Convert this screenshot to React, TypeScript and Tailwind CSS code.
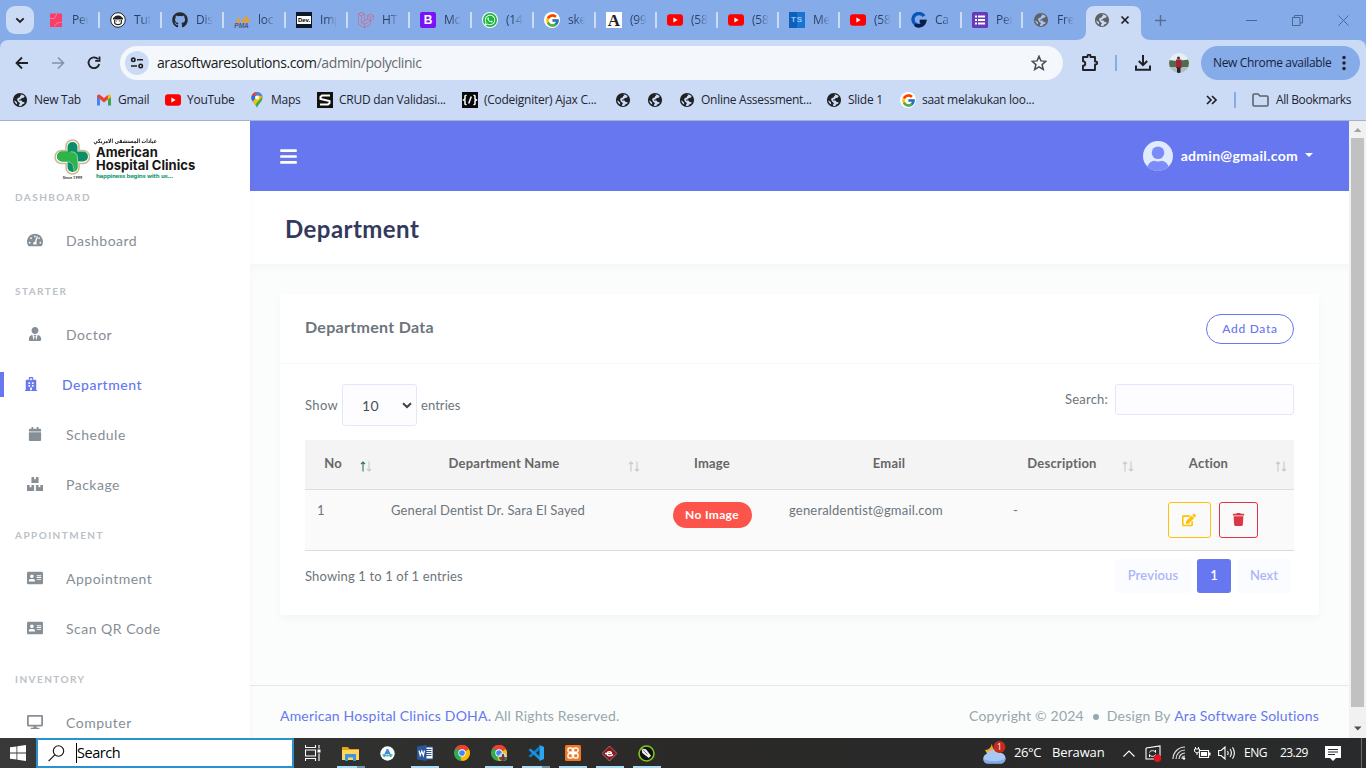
import React from 'react';
import {
  FaTachometerAlt, FaUserTie, FaHospital, FaCalendar, FaBoxes, FaAddressCard, FaDesktop,
  FaBars, FaEdit, FaTrash, FaGithub, FaWhatsapp, FaLaravel,
} from 'react-icons/fa';
import { FcGoogle } from 'react-icons/fc';

const SEGOE = "font-['Open_Sans','Noto_Sans',sans-serif]";
const NUNITO = "font-['Lato','Noto_Sans',sans-serif]";

/* ---------- browser icons ---------- */

function Globe({ dark = '#202124', light = '#cbdbf6' }: { dark?: string; light?: string }) {
  return (
    <svg width="16" height="16" viewBox="0 0 16 16">
      <circle cx="8" cy="8" r="7.1" fill={dark} />
      <path d="M8.3 2.5c1.5-.3 3.3.4 4.4 1.8l-1 1.5-1.9.2-.9 1.3-2 .4.3.9h2.2l1.3 1.5 1.9.2-.3 1.3-2.1.8-1 1.6-1.9.1-.4-1.4 1.1-1.5-2-1.600-.9-2 .6-1.600 2-.4.3-1.300 1.100-.5z" fill={light} />
      <path d="M2.300 8.200l2.600 2 .3 2.400C3.500 11.500 2.300 10 2.300 8.200z" fill={light} />
    </svg>
  );
}

function YouTube() {
  return (
    <svg width="16" height="16" viewBox="0 0 16 16">
      <rect x="0" y="2.300" width="16" height="11.400" rx="3" fill="#ff0000" />
      <path d="M6.400 5.600v4.800L10.600 8z" fill="#fff" />
    </svg>
  );
}

function Google() {
  return (
    <span className="flex size-4 items-center justify-center rounded-full bg-white">
      <FcGoogle className="size-[15px]" />
    </span>
  );
}

function Chrome({ size = 17, person = false }: { size?: number; person?: boolean }) {
  return (
    <svg width={size} height={size} viewBox="0 0 48 48">
      <path d="M24 24L3.200 12A24 24 0 0 1 44.800 12z" fill="#ea4335" />
      <path d="M24 24L44.800 12A24 24 0 0 1 24 48z" fill="#fbbc04" />
      <path d="M24 24L24 48A24 24 0 0 1 3.200 12z" fill="#34a853" />
      <path d="M34 29L24 48l-5-8 9-12z" fill="#fbbc04" />
      <path d="M3.200 12L14 30l9-4-9-14z" fill="#34a853" />
      <path d="M3.200 12A24 24 0 0 1 44.800 12L24 13z" fill="#ea4335" />
      <circle cx="24" cy="24" r="11" fill="#fff" />
      <circle cx="24" cy="24" r="8.500" fill="#4285f4" />
      {person && (
        <g>
          <circle cx="36" cy="36" r="12" fill="#cfd8dc" />
          <path d="M24 36a12 12 0 0 0 24 0z" fill="#4d6b43" />
          <path d="M32 32h8v14h-8z" fill="#8c2740" />
          <circle cx="36" cy="30" r="3" fill="#3b2420" />
        </g>
      )}
    </svg>
  );
}

function PerIcon() {
  return (
    <svg width="16" height="16" viewBox="0 0 16 16">
      <rect x="2" y="1.500" width="12" height="13.500" fill="#ff3d64" />
      <path d="M2 6.500h4.500l2.500-5M14 10l-5 1-2.500 3.500" stroke="#c78cb8" strokeWidth="1" fill="none" />
    </svg>
  );
}

function TutIcon() {
  return (
    <svg width="16" height="16" viewBox="0 0 16 16">
      <circle cx="8" cy="8" r="7.300" fill="#fff" stroke="#222" strokeWidth="1" />
      <path d="M4.500 5C5 3 11 3 11.500 5l1.500 1v1.500H3V6z" fill="#222" />
      <path d="M4.700 8v3.200c1 1.800 5.600 1.800 6.600 0V8" fill="none" stroke="#222" strokeWidth="1.200" />
      <path d="M6 9h1.200M8.800 9H10" stroke="#222" strokeWidth=".8" />
    </svg>
  );
}

function PmaIcon() {
  return (
    <svg width="16" height="16" viewBox="0 0 16 16">
      <path d="M5.500 1C6 5 4.500 8.500 .8 10.500h5zM10.200 .5C10.800 5 9 9 6.300 10.500h5.200zM12.200 3.500c2 2 3 4 3 7h-3z" fill="#f89c0e" />
      <text x="0.300" y="15.500" fontSize="6.500" fontWeight="700" fontStyle="italic" fontFamily="Liberation Sans" fill="#4f5584">PMA</text>
    </svg>
  );
}

function DevIcon() {
  return (
    <span className="flex size-4 items-center justify-center bg-[#101828]">
      <span className="flex h-[8px] w-[14px] items-center justify-center bg-white font-['Liberation_Sans',sans-serif] text-[6px] leading-none font-bold text-black">Dev.</span>
    </span>
  );
}

function LetterG() {
  return (
    <svg width="16" height="16" viewBox="0 0 16 16">
      <path d="M13 4.200A6 6 0 1 0 13.600 9.500H8.500" fill="none" stroke="#0b56b8" strokeWidth="3.400" />
      <path d="M4 12.500c3.200 2.800 8.600 1.500 9.600-3H9" fill="none" stroke="#0b1d48" strokeWidth="3.400" />
    </svg>
  );
}

function FormsIcon() {
  return (
    <svg width="16" height="16" viewBox="0 0 16 16">
      <rect width="16" height="16" rx="1.500" fill="#673ab7" />
      <path d="M3 4.500h2M3 8h2M3 11.500h2M6 4.500h7M6 8h7M6 11.500h7" stroke="#fff" strokeWidth="1.900" />
    </svg>
  );
}

type TabData = { icon: React.ReactNode; label: string };

const tabs: TabData[] = [
  { icon: <PerIcon />, label: 'Per' },
  { icon: <TutIcon />, label: 'Tut' },
  { icon: <FaGithub className="size-4 text-[#24292f]" />, label: 'Dis' },
  { icon: <PmaIcon />, label: 'loc' },
  { icon: <DevIcon />, label: 'Imp' },
  { icon: <FaLaravel className="size-4 text-[#e0566c]" />, label: 'HT' },
  { icon: <span className="flex size-4 items-center justify-center rounded-[2px] bg-[#7a12f7] font-['Liberation_Sans',sans-serif] text-[12px] leading-none font-bold text-white">B</span>, label: 'Mc' },
  { icon: <span className="flex size-4 items-center justify-center rounded-full bg-white"><span className="flex size-[14px] items-center justify-center rounded-full bg-[#16b83c]"><FaWhatsapp className="size-[12px] text-white" /></span></span>, label: '(14' },
  { icon: <Google />, label: 'ske' },
  { icon: <span className="flex size-4 items-center justify-center bg-white font-['Liberation_Serif',serif] text-[17px] leading-none font-bold text-[#222]">A</span>, label: '(99' },
  { icon: <YouTube />, label: '(58' },
  { icon: <YouTube />, label: '(58' },
  { icon: <span className="flex size-4 items-center justify-center bg-linear-to-r from-[#0d5fb8] from-50% to-[#1873d3] to-50% font-['Liberation_Sans',sans-serif] text-[8px] leading-none font-bold tracking-[1px] text-[#9cc8f5]">TS</span>, label: 'Me' },
  { icon: <YouTube />, label: '(58' },
  { icon: <LetterG />, label: 'Ca' },
  { icon: <FormsIcon />, label: 'Per' },
  { icon: <Globe dark="#5f6368" light="#a8c2ee" />, label: 'Fre' },
];

function TabStrip() {
  return (
    <div className="flex h-10 shrink-0 bg-[#85ace9]">
      <div className="flex w-[38px] shrink-0 items-center pl-1.5">
        <div className="flex size-7 items-center justify-center rounded-[9px] bg-[#cbdbf6]">
          <svg width="10" height="7" viewBox="0 0 10 7"><path d="M1.300 1.300L5 5l3.700-3.700" fill="none" stroke="#1f1f1f" strokeWidth="1.900" /></svg>
        </div>
      </div>
      {tabs.map((t, i) => (
        <div key={i} className={`flex shrink-0 items-center pl-2.5 ${i < 9 ? 'w-[62px]' : 'w-[61px]'}`}>
          <span className="block size-4 shrink-0">{t.icon}</span>
          <span className="ml-2 block w-[17px] overflow-hidden mask-r-from-40% text-[12px] leading-4 tracking-[-0.200px] whitespace-nowrap text-[#2c4066]">{t.label}</span>
          {i < 16 && <span className="ml-auto h-4 w-0.5 shrink-0 bg-[#cbdbf6]" />}
        </div>
      ))}
      <div className="flex w-[57px] shrink-0 items-end">
        <svg width="75" height="34" viewBox="0 0 75 34" className="-ml-2 shrink-0">
          <path d="M0 34c6 0 10-3 10-9V9c0-6 3-9 9-9h37c6 0 9 3 9 9v16c0 6 4 9 10 9z" fill="#cbdbf6" />
          <g transform="translate(18 6)">
            <circle cx="8" cy="8" r="7.100" fill="#5f6368" />
            <path d="M8.300 2.500c1.500-.3 3.300.4 4.400 1.800l-1 1.500-1.900.2-.9 1.300-2 .4.3.9h2.200l1.300 1.500 1.900.2-.3 1.300-2.100.8-1 1.600-1.900.1-.4-1.400 1.100-1.500-2-1.600-.9-2 .6-1.600 2-.4.3-1.300 1.100-.5z" fill="#cbdbf6" />
            <path d="M2.300 8.200l2.600 2 .3 2.400C3.500 11.500 2.300 10 2.300 8.200z" fill="#cbdbf6" />
          </g>
          <path d="M45.500 10.500l7 7M52.500 10.500l-7 7" stroke="#1f1f1f" strokeWidth="1.700" />
        </svg>
      </div>
      <div className="flex flex-1 items-center pl-[14px]">
        <svg width="11" height="11" viewBox="0 0 11 11"><path d="M5.500 0v11M0 5.500h11" stroke="#58708f" strokeWidth="1.500" /></svg>
        <div className="ml-auto flex items-center gap-[35px] pr-[17px]">
          <svg width="11" height="11" viewBox="0 0 11 11"><path d="M0 5.500h11" stroke="#4c6796" strokeWidth="1" /></svg>
          <svg width="11" height="11" viewBox="0 0 11 11"><path d="M.5 2.500h7.500v8H.5zM2.500 2.500V.5h8v7.500H8" fill="none" stroke="#4c6796" /></svg>
          <svg width="11" height="11" viewBox="0 0 11 11"><path d="M.5.5l10 10M10.500.5l-10 10" stroke="#4c6796" /></svg>
        </div>
      </div>
    </div>
  );
}

function Toolbar() {
  return (
    <div className="bg-[#85ace9]">
      <div className="flex h-[46px] items-center rounded-t-[8px] bg-[#cbdbf6] pl-[15px]">
        <svg width="14" height="14" viewBox="0 0 14 14"><path d="M13 7H2M7 1.500L1.500 7 7 12.500" fill="none" stroke="#202124" strokeWidth="1.800" /></svg>
        <svg className="ml-[22px]" width="14" height="14" viewBox="0 0 14 14"><path d="M1 7h11M7 1.500L12.500 7 7 12.500" fill="none" stroke="#8492aa" strokeWidth="1.600" /></svg>
        <svg className="ml-[21px]" width="16" height="16" viewBox="0 0 16 16"><path d="M13.200 9A5.400 5.400 0 1 1 12 4.200M13.500 1.500v4.300H9.200" fill="none" stroke="#202124" strokeWidth="1.800" /></svg>
        <div className="ml-[18px] flex h-[34px] w-[943px] items-center rounded-full bg-[#f4f8fd] pr-4 pl-[5px]">
          <div className="flex size-6 items-center justify-center rounded-full bg-[#cbdbf6]">
            <svg width="14" height="12" viewBox="0 0 14 12"><g fill="none" stroke="#1f1f1f" strokeWidth="1.600"><circle cx="3.300" cy="2.800" r="1.700" /><circle cx="10.700" cy="9" r="1.700" /><path d="M7 2.800h6M1 9h6" /></g></svg>
          </div>
          <span className="ml-2 pb-[2px] text-[14px] tracking-[-0.410px] whitespace-nowrap text-[#1b1c20]">arasoftwaresolutions.com<span className="text-[#666a70]">/admin/polyclinic</span></span>
          <svg className="ml-auto" width="16" height="16" viewBox="0 0 16 16"><path d="M8 1.200l1.900 4.700 5 .4-3.800 3.300 1.200 4.900L8 11.900l-4.300 2.600 1.200-4.900L1.100 6.300l5-.4z" fill="none" stroke="#494c50" strokeWidth="1.500" /></svg>
        </div>
        <svg className="ml-[18px]" width="18" height="18" viewBox="0 0 18 18"><path d="M2 3h4.500V2a1.500 1.500 0 0 1 3 0v1H14v4.500h.7a1.500 1.500 0 0 1 0 3H14V16H2v-4.200c3 0 3-4.600 0-4.600z" fill="none" stroke="#202124" strokeWidth="1.900" strokeLinejoin="round" /></svg>
        <span className="ml-4 h-4 w-0.5 bg-[#85ace9]" />
        <svg className="ml-[17px]" width="18" height="18" viewBox="0 0 18 18"><path d="M9 1v10M4.800 7L9 11.200 13.200 7M2 11.500v4.300h14v-4.300" fill="none" stroke="#202124" strokeWidth="2" /></svg>
        <svg className="ml-[17px]" width="20" height="20" viewBox="0 0 20 20">
          <clipPath id="avatar"><circle cx="10" cy="10" r="10" /></clipPath>
          <g clipPath="url(#avatar)"><path d="M0 0h20v8H0z" fill="#e8eef2" /><path d="M0 7l8 1 12-1.500V14H0z" fill="#526c4b" /><path d="M0 14h20v6H0z" fill="#b6bdb9" /><path d="M7 6.500h5.500V15H7z" fill="#a1243c" /><circle cx="9.500" cy="5" r="1.500" fill="#473029" /><path d="M8 14.500h3.500V20H8z" fill="#222430" /></g>
        </svg>
        <div className="ml-3 flex h-[34px] w-[159px] items-center rounded-full bg-[#85ace9] pl-3">
          <span className="text-[12px] tracking-[-0.350px] whitespace-nowrap text-[#16233c]">New Chrome available</span>
          <svg className="mr-3.5 ml-auto" width="4" height="16" viewBox="0 0 4 16"><g fill="#202124"><circle cx="2" cy="2.500" r="1.700" /><circle cx="2" cy="8" r="1.700" /><circle cx="2" cy="13.500" r="1.700" /></g></svg>
        </div>
      </div>
    </div>
  );
}

function Bookmark({ icon, label, width }: { icon: React.ReactNode; label?: string; width: string }) {
  return (
    <div className={`flex shrink-0 items-center ${width}`}>
      <span className="block size-4 shrink-0">{icon}</span>
      {label && <span className="ml-1.5 tracking-[-0.270px] whitespace-nowrap">{label}</span>}
    </div>
  );
}

function Bookmarks() {
  return (
    <div className="flex h-[35px] shrink-0 items-center border-b border-[#a3b1cf] bg-[#cbdbf6] pb-[6px] pl-3 text-[12px] text-[#1f2530]">
      <Bookmark icon={<Globe />} label="New Tab" width="w-[84px]" />
      <Bookmark icon={
        <svg width="16" height="16" viewBox="0 0 16 16"><path d="M1 4v9.500h3V7.300z" fill="#4285f4" /><path d="M12 7.300v6.200h3V4z" fill="#34a853" /><path d="M1 4.300C1 2.600 2.900 1.900 4.100 2.900L8 6l3.900-3.100 .1 4.400L8 10.500 4 7.300 1 5z" fill="#ea4335" /><path d="M12 2.900c1.200-1 3-.3 3 1.400v.9l-3 2.300z" fill="#fbbc04" /></svg>
      } label="Gmail" width="w-[69px]" />
      <Bookmark icon={<YouTube />} label="YouTube" width="w-[84px]" />
      <Bookmark icon={
        <svg width="16" height="16" viewBox="0 0 16 16"><clipPath id="pin"><path d="M8 0a5.500 5.500 0 0 0-5.500 5.500C2.500 10 6.500 11 8 16c1.500-5 5.500-6 5.500-10.500A5.500 5.500 0 0 0 8 0z" /></clipPath><g clipPath="url(#pin)"><path d="M0 0h16v16H0z" fill="#34a853" /><path d="M0 0h7l2 2-7 8z" fill="#ea4335" /><path d="M8 5L0 14V7l3-4z" fill="#1a73e8" /><path d="M3 10l9-9 2 3-8 9z" fill="#fbbc04" /><path d="M6 0h9v5l-4-1-5-3z" fill="#4285f4" /></g><circle cx="8" cy="5.500" r="2" fill="#fff" /></svg>
      } label="Maps" width="w-[68px]" />
      <Bookmark icon={
        <svg width="16" height="16" viewBox="0 0 16 16"><path d="M0 0h16v16H0z" fill="#111" /><path d="M13 3.500H5L3.500 5v2l9 2v2L11 12.500H3" fill="none" stroke="#fff" strokeWidth="2" /></svg>
      } label="CRUD dan Validasi..." width="w-[145px]" />
      <Bookmark icon={
        <svg width="16" height="16" viewBox="0 0 16 16"><path d="M0 0h16v16H0z" fill="#0a0a0a" /><path d="M4.500 3L3 4v3L1.500 8 3 9v3l1.500 1M11.500 3L13 4v3l1.500 1L13 9v3l-1.500 1M9.300 4.500l-2.600 7" fill="none" stroke="#fff" strokeWidth="1.500" /></svg>
      } label="(Codeigniter) Ajax C..." width="w-[153px]" />
      <Bookmark icon={<Globe />} width="w-[32px]" />
      <Bookmark icon={<Globe />} width="w-[32px]" />
      <Bookmark icon={<Globe />} label="Online Assessment..." width="w-[147px]" />
      <Bookmark icon={<Globe />} label="Slide 1" width="w-[74px]" />
      <Bookmark icon={<Google />} label="saat melakukan loo..." width="w-[140px]" />
      <div className="ml-auto flex items-center pr-[15px]">
        <svg width="11" height="10" viewBox="0 0 11 10"><path d="M1 1l4 4-4 4M6 1l4 4-4 4" fill="none" stroke="#202124" strokeWidth="1.700" /></svg>
        <span className="ml-[17px] h-4 w-0.5 bg-[#85ace9]" />
        <svg className="ml-4" width="17" height="14" viewBox="0 0 17 14"><path d="M1 2.200C1 1.500 1.500 1 2.200 1H6l2 2h6.800c.7 0 1.200.5 1.200 1.200v7.600c0 .7-.5 1.200-1.200 1.200H2.200c-.7 0-1.200-.5-1.200-1.200z" fill="none" stroke="#5f6368" strokeWidth="1.600" /></svg>
        <span className="ml-[7px] tracking-[-0.380px] whitespace-nowrap">All Bookmarks</span>
      </div>
    </div>
  );
}

/* ---------- page ---------- */

function SideHeading({ children, first }: { children: React.ReactNode; first?: boolean }) {
  return (
    <div className={`flex shrink-0 items-end pl-[15px] ${first ? 'h-[35px]' : 'h-11'}`}>
      <span className="text-[10px] leading-[38px] font-bold tracking-[1.450px] text-[#bcc1c6]">{children}</span>
    </div>
  );
}

function SideItem({ icon, label, active }: { icon: React.ReactNode; label: string; active?: boolean }) {
  return (
    <div className={`flex h-[50px] shrink-0 items-center pb-[2px] ${active ? 'text-[#6777ef]' : 'text-[#868e96]'}`}>
      {active ? <span className="h-[25px] w-1 bg-[#6777ef]" /> : null}
      <span className={`flex justify-center ${active ? 'w-[54px]' : 'w-[69px]'}`}>{icon}</span>
      <span className={`text-[14px] whitespace-nowrap ${active ? 'ml-1 font-medium tracking-[0.530px]' : '-ml-[3px] tracking-[0.500px]'}`}>{label}</span>
    </div>
  );
}

function Logo() {
  return (
    <div className="flex h-[60px] shrink-0 pt-[17px] pl-[53px]">
      <div className="flex w-[39px] flex-col items-center">
        <svg width="39" height="38" viewBox="0 0 39 38" className="shrink-0">
          <path d="M13 12V8a6.500 6.500 0 0 1 13 0v4h4a6.500 6.500 0 0 1 0 13h-4v4a6.500 6.500 0 0 1-13 0v-4H8.500a6.500 6.500 0 0 1 0-13z" fill="#fff" stroke="#cdb890" strokeWidth="1.500" transform="translate(0 .5)" />
          <path d="M14.500 13.500V9a5 5 0 0 1 10 0v4.500H30a5 5 0 0 1 0 10h-5.500V29a5 5 0 0 1-10 0v-5.500H9a5 5 0 0 1 0-10z" fill="#0a8f68" />
          <path d="M9 13.500h8c5 0 7.500 2 7.500 6.500V29c0 2-1 4-3 4.600C22 28 20 23.500 14 23.500H9a5 5 0 0 1 0-10z" fill="#2eb54a" />
          <path d="M18 13.800c4 0 6.500 2 6.500 6.200V24M14.500 23.700c4 .3 6.500 3 6.500 9.500" fill="none" stroke="#d9efd9" strokeWidth=".6" />
        </svg>
        <span className="-mt-[1px] text-[4px] leading-[5px] font-bold whitespace-nowrap text-[#333]">Since 1999</span>
      </div>
      <div className="ml-1 flex flex-col whitespace-nowrap text-[#161616]">
        <span dir="rtl" className="w-[80px] origin-left scale-x-[0.760] text-right font-['DejaVu_Sans',sans-serif] text-[6px] leading-[6px] font-bold tracking-[-0.550px]">عيادات المستشفى الامريكي</span>
        <span className="mt-[2px] font-['Inter',sans-serif] text-[13px] leading-[12.500px] font-bold tracking-[0.020px]">American<br />Hospital Clinics</span>
        <span className="mt-[1px] font-['DejaVu_Sans',sans-serif] text-[5.500px] leading-[8px] font-bold tracking-[-0.300px] text-[#1b9c78]">happiness begins with us...</span>
      </div>
    </div>
  );
}

function Sidebar() {
  return (
    <aside className="z-10 flex w-[250px] shrink-0 flex-col overflow-hidden bg-white shadow-[0_4px_8px_rgba(0,0,0,0.03)]">
      <Logo />
      <SideHeading first>DASHBOARD</SideHeading>
      <SideItem icon={<FaTachometerAlt className="size-4" />} label="Dashboard" />
      <SideHeading>STARTER</SideHeading>
      <SideItem icon={<FaUserTie className="size-[14px]" />} label="Doctor" />
      <SideItem active icon={<FaHospital className="size-[14px]" />} label="Department" />
      <SideItem icon={<FaCalendar className="size-[14px]" />} label="Schedule" />
      <SideItem icon={<FaBoxes className="size-4" />} label="Package" />
      <SideHeading>APPOINTMENT</SideHeading>
      <SideItem icon={<FaAddressCard className="size-4" />} label="Appointment" />
      <SideItem icon={<FaAddressCard className="size-4" />} label="Scan QR Code" />
      <SideHeading>INVENTORY</SideHeading>
      <SideItem icon={<FaDesktop className="size-4" />} label="Computer" />
    </aside>
  );
}

function SortArrows({ active }: { active?: boolean }) {
  return (
    <svg width="12" height="11" viewBox="0 0 12 11" className="mt-[6px] mr-[7px] shrink-0">
      <path d="M3 10.500V1M1 3l2-2 2 2" fill="none" stroke={active ? '#2f7a45' : '#c9c9c9'} strokeWidth="1.100" />
      <path d="M9 .5V10M7 8l2 2 2-2" fill="none" stroke="#c9c9c9" strokeWidth="1.100" />
    </svg>
  );
}

function HeadCell({ label, sort, active }: { label: string; sort?: boolean; active?: boolean }) {
  return (
    <th className="h-[49px] border-b border-[#dcdcdc] p-0 font-bold text-[#666]">
      <div className="flex items-center pb-[2px] pl-3">
        <span className={`flex-1 text-center whitespace-nowrap ${sort ? '' : 'pr-3'}`}>{label}</span>
        {sort && <span className="flex w-[30px] justify-end"><SortArrows active={active} /></span>}
      </div>
    </th>
  );
}

function DataTable() {
  return (
    <table className="mt-[14px] w-full table-fixed border-collapse text-[13px] text-[#6c757d]">
      <colgroup>
        <col className="w-[74px]" /><col className="w-[268px]" /><col className="w-[130px]" />
        <col className="w-[224px]" /><col className="w-[140px]" /><col className="w-[153px]" />
      </colgroup>
      <thead>
        <tr className="bg-[#f4f4f4] tracking-[0.200px]">
          <HeadCell label="No" sort active />
          <HeadCell label="Department Name" sort />
          <HeadCell label="Image" />
          <HeadCell label="Email" />
          <HeadCell label="Description" sort />
          <HeadCell label="Action" sort />
        </tr>
      </thead>
      <tbody>
        <tr className="h-[61px] border-b border-[#dcdcdc] bg-[#fafafa] align-top leading-[18px]">
          <td className="px-3 pt-[11px]">1</td>
          <td className="px-3 pt-[11px] tracking-[0.150px]">General Dentist Dr. Sara El Sayed</td>
          <td className="pt-3 text-center"><span className="inline-flex h-[26px] w-[79px] items-center justify-center rounded-full bg-[#fc544b] text-[12px] font-bold tracking-[0.350px] text-white">No Image</span></td>
          <td className="px-3 pt-[11px] tracking-[0.190px]">generaldentist@gmail.com</td>
          <td className="px-3 pt-[11px]">-</td>
          <td className="pt-3 pl-[27px]">
            <div className="flex gap-2">
              <span className="flex h-9 w-[43px] items-center justify-center rounded-[3px] border border-[#ffc107] pr-px text-[#ffc107]"><FaEdit className="size-[14px]" /></span>
              <span className="flex h-9 w-[39px] items-center justify-center rounded-[3px] border border-[#dc3545] pr-px text-[#dc3545]"><FaTrash className="size-[13px]" /></span>
            </div>
          </td>
        </tr>
      </tbody>
    </table>
  );
}

function Card() {
  return (
    <section className="mx-[30px] mt-[30px] flex h-[321px] shrink-0 flex-col rounded-[3px] bg-white shadow-[0_4px_8px_rgba(0,0,0,0.03)]">
      <div className="flex h-[70px] shrink-0 items-center justify-between border-b border-[#f9f9f9] px-[25px]">
        <h4 className="pb-[3px] text-[16px] font-bold tracking-[0.300px] text-[#6c757d]">Department Data</h4>
        <button className="flex h-[30px] w-[88px] items-center justify-center rounded-full border border-[#6777ef] text-[12px] font-medium tracking-[0.700px] text-[#6777ef]">Add Data</button>
      </div>
      <div className="flex flex-1 flex-col px-[25px] pt-5 text-[13px] text-[#6c757d]">
        <div className="flex h-[42px] items-start justify-between">
          <div className="flex items-center">
            <span className="w-[37px] pt-[2px] tracking-[0.350px]">Show</span>
            <div className="flex h-[42px] w-[75px] items-center justify-between rounded-[3px] border border-[#e4e6fc] bg-[#fdfdff] pr-1 pl-[19px] text-[14px] tracking-[0.300px] text-[#495057]">
              10
              <svg width="10" height="7" viewBox="0 0 10 7"><path d="M1 1.200L5 5l4-3.800" fill="none" stroke="#3d434a" strokeWidth="2" /></svg>
            </div>
            <span className="ml-1 pt-[2px] tracking-[0.060px]">entries</span>
          </div>
          <div className="flex items-center">
            <span className="tracking-[0.200px]">Search:</span>
            <div className="ml-[7px] h-[31px] w-[179px] rounded-[3px] border border-[#e4e6fc] bg-[#fdfdff]" />
          </div>
        </div>
        <DataTable />
        <div className="flex justify-between pt-2">
          <span className="pt-[8px] leading-[19px] tracking-[0.140px]">Showing 1 to 1 of 1 entries</span>
          <div className="mr-[3px] flex h-[34px] gap-[6px] font-semibold text-[#adb5f7]">
            <span className="flex w-[76px] items-center justify-center rounded-[3px] bg-[#fbfcff] tracking-[0.150px]">Previous</span>
            <span className="flex w-[34px] items-center justify-center rounded-[3px] bg-[#6777ef] text-white">1</span>
            <span className="flex w-[54px] items-center justify-center rounded-[3px] bg-[#fbfcff]">Next</span>
          </div>
        </div>
      </div>
    </section>
  );
}

function Page() {
  return (
    <div className={`flex h-[617px] shrink-0 overflow-hidden ${NUNITO}`}>
      <Sidebar />
      <main className="flex w-[1099px] shrink-0 flex-col bg-[#fafdfb]">
        <nav className="flex h-[70px] shrink-0 items-center bg-[#6777ef] pr-9 pl-[29px] text-white">
          <FaBars className="size-[19px]" />
          <svg className="ml-auto" width="30" height="30" viewBox="0 0 30 30">
            <clipPath id="user"><circle cx="15" cy="15" r="15" /></clipPath>
            <g clipPath="url(#user)"><path d="M0 0h30v30H0z" fill="#dfebff" /><circle cx="15" cy="11.700" r="6.300" fill="#7b8cf8" /><path d="M4 30c-.5-6 3-9.500 7-10.300 2.500 1 5.500 1 8 0C23 20.500 26.500 24 26 30z" fill="#7b8cf8" /></g>
          </svg>
          <span className="ml-2 pb-px text-[14px] font-bold tracking-[0.290px] whitespace-nowrap">admin@gmail.com</span>
          <svg className="mb-[3px] ml-[7px]" width="8" height="4" viewBox="0 0 8 4"><path d="M0 0h8L4 4z" fill="#fff" /></svg>
        </nav>
        <header className="flex h-[73px] shrink-0 items-center bg-white pl-[35px] shadow-[0_4px_8px_rgba(0,0,0,0.03)]">
          <h1 className="pt-[3px] text-[24px] leading-7 font-bold tracking-[0.450px] text-[#34395e]">Department</h1>
        </header>
        <Card />
        <footer className="mt-[70px] flex h-[62px] shrink-0 items-center justify-between border-t border-[#e3eaef] px-[30px] pb-[2px] text-[14px] tracking-[0.190px] text-[#98a6ad]">
          <span className="whitespace-nowrap"><span className="text-[#6777ef]">American Hospital Clinics DOHA.</span> All Rights Reserved.</span>
          <span className="flex items-center whitespace-nowrap">Copyright © 2024<span className="mt-[3px] mr-2 ml-[9px] size-1.5 rounded-full bg-[#98a6ad]" />Design By&nbsp;<span className="text-[#6777ef]">Ara Software Solutions</span></span>
        </footer>
      </main>
      <div className="flex w-[17px] shrink-0 flex-col items-center bg-[#f1f1f1]">
        <svg width="17" height="17" viewBox="0 0 17 17" className="shrink-0"><path d="M5 11h7.500L8.800 7z" fill="#a3a3a3" /></svg>
        <div className="h-[569px] w-[13px] shrink-0 bg-[#c1c1c1]" />
        <svg width="17" height="17" viewBox="0 0 17 17" className="mt-[14px] shrink-0"><path d="M5 5.500h7.500L8.800 9.500z" fill="#505050" /></svg>
      </div>
    </div>
  );
}

/* ---------- taskbar ---------- */

function TaskIcon({ children, open }: { children: React.ReactNode; open?: 'full' | 'stack' }) {
  return (
    <div className="flex h-full w-[37px] shrink-0 flex-col items-center">
      <div className="flex flex-1 items-center pt-[2px]">{children}</div>
      <div className="flex h-0.5 w-7 shrink-0">
        {open && <span className={`h-full bg-[#a9dcf6] ${open === 'stack' ? 'w-5' : 'w-7'}`} />}
        {open === 'stack' && <span className="h-full w-2 bg-[#7396a7]" />}
      </div>
    </div>
  );
}

function Taskbar() {
  return (
    <div className="flex h-[30px] shrink-0 bg-linear-to-r from-[#393939] via-[#2a2928] to-[#292a2b] text-white">
      <div className="flex w-9 shrink-0 items-center justify-center">
        <svg width="16" height="16" viewBox="0 0 16 16"><path d="M0 2.300L6.500 1.400v6.200H0zM7.300 1.300L16 0v7.600H7.300zM0 8.400h6.500v6.200L0 13.700zM7.300 8.400H16V16l-8.700-1.300z" fill="#fff" /></svg>
      </div>
      <div className="flex w-[258px] shrink-0 items-center border-2 border-[#2892d0] bg-white pl-2.5 text-black">
        <svg width="17" height="17" viewBox="0 0 17 17"><circle cx="10.500" cy="6" r="5.200" fill="none" stroke="#111" strokeWidth="1.100" /><path d="M6.800 9.900L.6 16.200" stroke="#111" strokeWidth="1.200" /></svg>
        <span className="ml-[11px] h-5 w-px bg-black" />
        <span className="text-[14.500px] tracking-[-0.450px]">Search</span>
      </div>
      <TaskIcon>
        <svg width="16" height="16" viewBox="0 0 16 16"><g fill="none" stroke="#fff" strokeWidth="1.100"><path d="M.5 0v2.500h10V0M.5 16v-2.500h10V16M.5 5h10v6H.5zM14 0v3.500M14 8.500V16" /></g><path d="M12.500 4.500h3v3h-3z" fill="#fff" /></svg>
      </TaskIcon>
      <div className="flex pl-px">
        <TaskIcon open="stack">
          <svg width="17" height="15" viewBox="0 0 17 15"><path d="M0 1h6l1.500 2H17v11H0z" fill="#e5a50d" /><path d="M0 4h17v10H0z" fill="#ffd560" /><path d="M3 15V8h11v7h-3v-3.500H6V15z" fill="#3b97dd" /></svg>
        </TaskIcon>
        <TaskIcon>
          <svg width="15" height="15" viewBox="0 0 15 15"><circle cx="7.500" cy="7.500" r="7.200" fill="#fff" /><path d="M7.500 3L3.800 11M7.500 3l3.700 8" stroke="#4285f4" strokeWidth="1.500" fill="none" /><path d="M2.500 8.500c3 1.500 7 1.500 10 0" stroke="#42c591" strokeWidth="1.400" fill="none" /><circle cx="7.500" cy="6.800" r="1.800" fill="#4c83e7" /></svg>
        </TaskIcon>
        <TaskIcon open="full">
          <svg width="16" height="16" viewBox="0 0 16 16"><path d="M8 2h8v12H8z" fill="#fff" stroke="#2b579a" /><path d="M9 4.500h5.500M9 6.500h5.500M9 8.500h5.500M9 10.500h5.500" stroke="#2b579a" /><path d="M0 1.500L9.500 0v16L0 14.500z" fill="#2b579a" /><path d="M2 5.500l1.200 5L4.800 6l1.500 4.500 1.200-5" fill="none" stroke="#fff" strokeWidth="1.200" /></svg>
        </TaskIcon>
        <TaskIcon><Chrome size={16} /></TaskIcon>
        <TaskIcon open="full"><Chrome size={16} person /></TaskIcon>
        <TaskIcon open="stack">
          <svg width="16" height="16" viewBox="0 0 16 16"><path d="M11.500 0L16 2v12l-4.500 2z" fill="#2aa7f2" /><path d="M12 .5v4L2.500 12.500.5 11z" fill="#0f7cc9" /><path d="M12 15.500v-4L2.500 3.500.5 5z" fill="#1694e0" /></svg>
        </TaskIcon>
        <TaskIcon open="full">
          <svg width="16" height="16" viewBox="0 0 16 16"><rect width="16" height="16" rx="1.500" fill="#f37623" /><rect x="3" y="3" width="4.500" height="4.300" rx="1.600" fill="none" stroke="#fff" strokeWidth="1.500" /><rect x="8.500" y="3" width="4.500" height="4.300" rx="1.600" fill="none" stroke="#fff" strokeWidth="1.500" /><rect x="3" y="8.500" width="4.500" height="4.500" rx="1.600" fill="none" stroke="#fff" strokeWidth="1.500" /><rect x="8.500" y="8.500" width="4.500" height="4.500" rx="1.600" fill="none" stroke="#fff" strokeWidth="1.500" /><path d="M5.500 8h5" stroke="#fff" strokeWidth="2.200" /></svg>
        </TaskIcon>
        <TaskIcon open="full">
          <svg width="15" height="15" viewBox="0 0 15 15"><path d="M7.500 0L15 7.500 7.500 15 0 7.500z" fill="#8d1519" stroke="#d8c9c9" strokeWidth=".5" /><path d="M3 7.500h6.500c0-2.500-4-2.500-4.500 0 0 3 4 3 6 1" fill="none" stroke="#fff" strokeWidth="1.300" /></svg>
        </TaskIcon>
        <TaskIcon open="full">
          <svg width="17" height="17" viewBox="0 0 17 17"><circle cx="8.500" cy="8.500" r="7.500" fill="#111" stroke="#7ac71d" strokeWidth="1.600" /><path d="M3.500 3.500l4.500.8 5 6.500-2.200 2.200-6.500-5z" fill="#eee" /><path d="M4.500 4.500l5 5" stroke="#555" strokeWidth=".8" /></svg>
        </TaskIcon>
      </div>
      <div className="ml-auto flex items-center">
        <svg width="26" height="26" viewBox="0 0 26 26">
          <path d="M11 2c-.5 5 2 9 7 10-3 5-12 4-14-2 4 0 7-3 7-8z" fill="#f5a623" />
          <path d="M6 23.500a5 5 0 0 1-.5-9.500c1-5 9-5.500 11-1 5-1 8 2 8 5.500s-2.500 5-5 5z" fill="#a9c9f3" />
          <path d="M2.500 19c1 5 4 4.500 8 4.500h9c3 0 5-2.500 5-5-5 3-14 4-22 .5z" fill="#7ea9e6" />
          <circle cx="18.500" cy="7" r="6" fill="#c42b1c" />
          <text x="18.500" y="10" fontSize="8.500" textAnchor="middle" fontFamily="Open Sans" fill="#fff">1</text>
        </svg>
        <span className="ml-[7px] w-[38px] text-[13px] tracking-[-0.400px] whitespace-nowrap">26°C</span>
        <span className="w-[71px] text-[13px] tracking-[-0.150px] whitespace-nowrap">Berawan</span>
        <svg width="12" height="7" viewBox="0 0 12 7"><path d="M.5 6.500l5.500-5.500 5.500 5.500" fill="none" stroke="#fff" strokeWidth="1.100" /></svg>
        <svg className="ml-[10px]" width="17" height="17" viewBox="0 0 17 17"><path d="M1 3l14-2v10M1 3v11h8" fill="none" stroke="#fff" strokeWidth="1.100" /><path d="M4.500 7.500c1-2.500 5-2.500 6 0V5M10.500 9.500c-1 2.500-5 2.500-6 0V12" fill="none" stroke="#fff" /><circle cx="12.500" cy="13.300" r="3.700" fill="#e81123" /></svg>
        <svg className="ml-[10px]" width="14" height="14" viewBox="0 0 14 14"><g fill="none" stroke="#ddd" strokeWidth="1.200"><path d="M1 13A12 12 0 0 1 13 1M4 13a9 9 0 0 1 9-9M7 13a6 6 0 0 1 6-6M10 13a3 3 0 0 1 3-3" /></g><circle cx="12" cy="12.500" r="1.200" fill="#fff" /></svg>
        <svg className="ml-[8px]" width="17" height="14" viewBox="0 0 17 14"><path d="M5.500 4.500h9v7h-9z" fill="none" stroke="#fff" strokeWidth="1.200" /><path d="M7 6h6v4H7zM15 6.500h1.500v3H15z" fill="#fff" /><path d="M1.500 1v2M4.500 1v2M.5 3h5v2.500L3 7 .5 5.500zM3 7v2" fill="#292a2b" stroke="#fff" strokeWidth="1" /></svg>
        <svg className="ml-[7px]" width="18" height="14" viewBox="0 0 18 14"><g fill="none" stroke="#fff" strokeWidth="1.100"><path d="M.6 4.500h2.500L7 1v12L3.100 9.500H.6zM9.500 5c.8 1.200.8 2.800 0 4M12 3c1.600 2.300 1.600 5.700 0 8M14.500 1.200c2.300 3.500 2.300 8.100 0 11.600" /></g></svg>
        <span className="ml-2 w-[36px] text-[12px] tracking-[-0.500px]">ENG</span>
        <span className="w-[45px] text-[12px] tracking-[-0.550px]">23.29</span>
        <svg width="16" height="17" viewBox="0 0 16 17"><path d="M0 1h16v12h-5l-3 3-3-3H0z" fill="#fff" /><path d="M3 4.500h10M3 7h10M3 9.500h7" stroke="#292a2b" strokeWidth="1.100" /></svg>
        <span className="ml-5 h-[30px] w-px bg-[#6a6a6a]" />
        <span className="w-1" />
      </div>
    </div>
  );
}

export default function App() {
  return (
    <div className={`flex h-[768px] w-[1366px] flex-col overflow-hidden bg-white ${SEGOE}`}>
      <TabStrip />
      <Toolbar />
      <Bookmarks />
      <Page />
      <Taskbar />
    </div>
  );
}
